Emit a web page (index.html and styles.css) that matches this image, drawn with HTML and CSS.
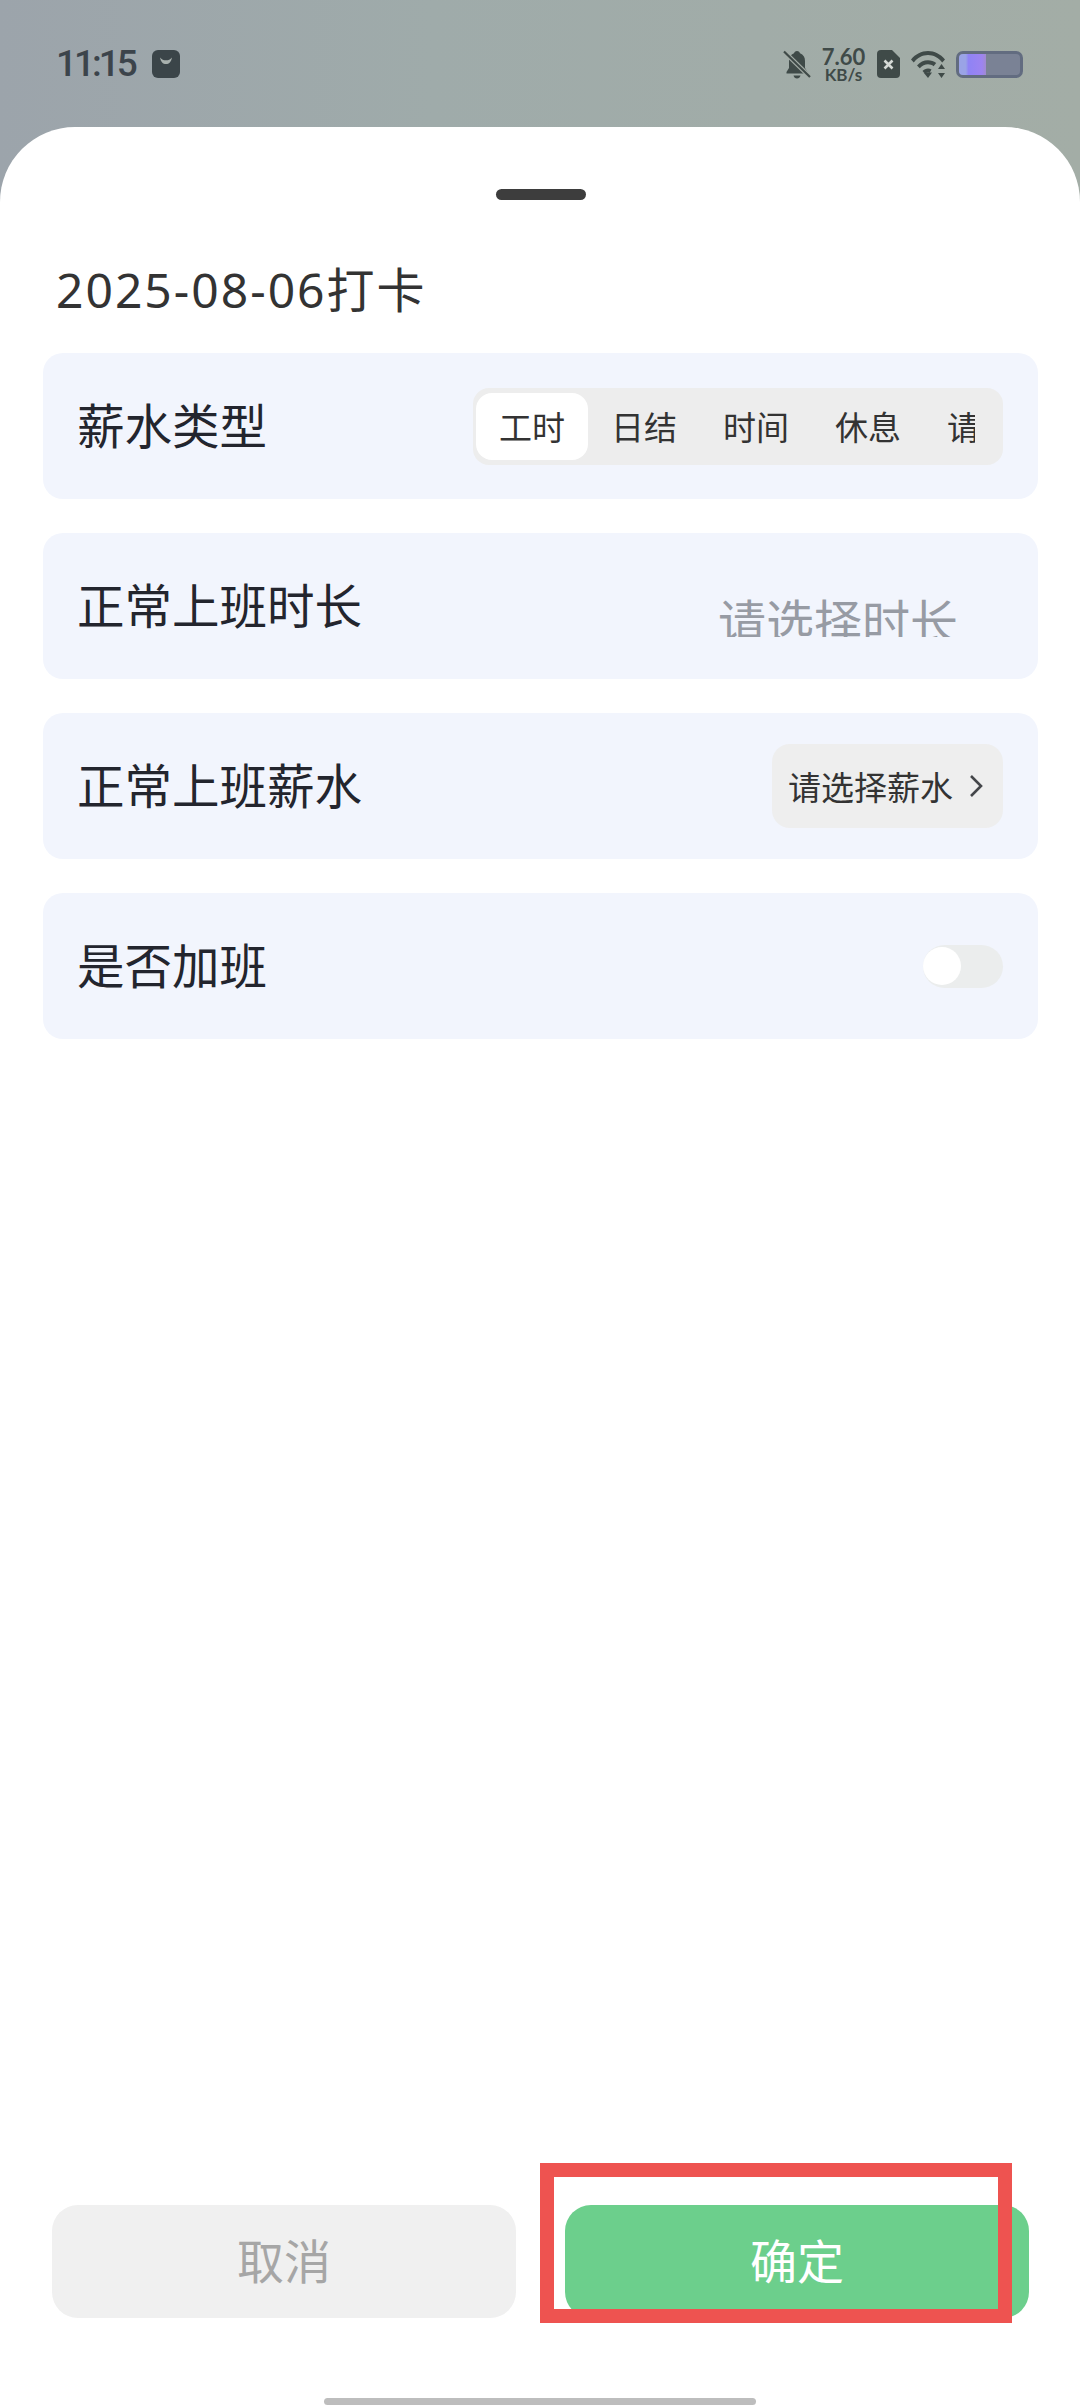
FILE: index.html
```html
<!DOCTYPE html>
<html lang="zh-CN">
<head>
    <meta charset="UTF-8">
    <meta name="viewport" content="width=device-width, initial-scale=1.0">
    <title>打卡</title>
    <link rel="stylesheet" href="styles.css">
</head>
<body>
    <div class="status-bar">
        <div class="status-left">
            <span class="clock">11:15</span>
            <svg class="bag-icon" width="28" height="28" viewBox="0 0 28 28">
                <rect width="28" height="28" rx="6" fill="#3b4549"/>
                <path d="M8 7.5c.8 4.6 3 6.5 6 6.5s5.200-1.900 6-6.500c-1.700 2-3.600 2.800-6 2.800s-4.300-.8-6-2.800z" fill="#a9b1ae"/>
            </svg>
        </div>
        <div class="status-right">
            <svg class="bell-icon" width="28" height="29" viewBox="0 0 28 29">
                <path d="M14 1c1.700 0 2.700 1 3 2.300 3.400 1.200 5 4 5 7.700v7l2.500 4v1.500H3.500V22L6 18v-7c0-3.700 1.600-6.500 5-7.700C11.300 2 12.300 1 14 1z" fill="#3f4a48"/>
                <path d="M10.500 25.500h7c-.4 2-1.800 3-3.500 3s-3.100-1-3.500-3z" fill="#3f4a48"/>
                <path d="M1 1.500 27 27" stroke="#a3aca6" stroke-width="4.500"/>
                <path d="M1 1.500 27 27" stroke="#3f4a48" stroke-width="2.200"/>
            </svg>
            <div class="net-speed">
                <span class="net-value">7.60</span>
                <span class="net-unit">KB/s</span>
            </div>
            <svg class="sim-icon" width="23" height="28" viewBox="0 0 23 28">
                <path d="M4 0h11l8 8v16a4 4 0 0 1-4 4H4a4 4 0 0 1-4-4V4a4 4 0 0 1 4-4z" fill="#3f4a48"/>
                <path d="M7.500 10.500l8 8M15.500 10.500l-8 8" stroke="#d5dad6" stroke-width="2.600"/>
            </svg>
            <svg class="wifi-icon" width="35" height="28" viewBox="0 0 35 28">
                <path d="M0 9.500C4.500 4 10.500 1 17 1s12.500 3 17 8.500l-2.800 3C27.500 7.700 22.500 5 17 5S6.500 7.700 2.800 12.500z" fill="#3f4a48"/>
                <path d="M6 15.500c3-3.400 6.800-5.200 11-5.200 3 0 5.800 1 8.200 2.700l-2.600 3.200C21 15 19 14.300 17 14.300c-3 0-5.800 1.300-8.200 3.900z" fill="#3f4a48"/>
                <path d="M11.500 21c1.500-1.500 3.400-2.400 5.500-2.400 1.300 0 2.500.3 3.500 1l-2 3.400-.2-.100c-.4-.3-.8-.4-1.300-.4-1 0-1.900.5-2.600 1.200z" fill="#3f4a48"/>
                <path d="M12.500 22.500 17 28l4-5.500z" fill="#3f4a48"/>
                <path d="M30.500 14l3.500 5h-7zM30.500 28l-3.500-5h7z" fill="#3f4a48"/>
            </svg>
            <div class="battery">
                <div class="battery-fill"></div>
            </div>
        </div>
    </div>

    <div class="sheet">
        <div class="sheet-handle"></div>
        <h1 class="sheet-title">2025-08-06打卡</h1>

        <div class="form-list">
            <div class="form-row">
                <span class="row-label">薪水类型</span>
                <div class="segment">
                    <div class="segment-scroll">
                        <span class="segment-item active">工时</span>
                        <span class="segment-item">日结</span>
                        <span class="segment-item">时间</span>
                        <span class="segment-item">休息</span>
                        <span class="segment-item">请假</span>
                    </div>
                </div>
            </div>
            <div class="form-row">
                <span class="row-label">正常上班时长</span>
                <div class="duration-input"><span>请选择时长</span></div>
            </div>
            <div class="form-row">
                <span class="row-label">正常上班薪水</span>
                <div class="salary-pick">
                    <span>请选择薪水</span>
                    <svg width="14" height="24" viewBox="0 0 14 24">
                        <path d="M2 2l10 10L2 22" fill="none" stroke="#44464a" stroke-width="2.600"/>
                    </svg>
                </div>
            </div>
            <div class="form-row">
                <span class="row-label">是否加班</span>
                <div class="toggle"><div class="toggle-thumb"></div></div>
            </div>
        </div>

        <div class="sheet-footer">
            <button class="btn btn-cancel">取消</button>
            <button class="btn btn-ok">确定</button>
            <div class="highlight-box"></div>
        </div>
        <div class="home-bar"></div>
    </div>
</body>
</html>
```

FILE: styles.css
```css
* {
    box-sizing: border-box;
}
html, body {
    margin: 0;
    padding: 0;
    height: 100%;
}
body {
    width: 1080px;
    height: 2408px;
    display: flex;
    flex-direction: column;
    overflow: hidden;
    background: linear-gradient(to right, #9ca4ab 0%, #9fabaa 40%, #a3ada6 100%);
    font-family: "Noto Sans", "Noto Sans CJK SC", sans-serif;
}

/* status bar */
.status-bar {
    height: 127px;
    flex-shrink: 0;
    display: flex;
    justify-content: space-between;
    align-items: flex-start;
    padding: 50px 57px 0 56px;
}
.status-left {
    display: flex;
    align-items: center;
    gap: 17px;
    height: 28px;
}
.clock {
    font-family: "Roboto", sans-serif;
    font-size: 37px;
    font-weight: 500;
    letter-spacing: -3px;
    color: #3c444b;
    line-height: 28px;
}
.status-right {
    display: flex;
    align-items: center;
    height: 28px;
}
.bell-icon {
    margin-right: 11px;
}
.net-speed {
    display: flex;
    flex-direction: column;
    align-items: center;
    width: 43px;
    margin-right: 12px;
    color: #3f4a48;
    font-family: "Lato", sans-serif;
    font-weight: 700;
}
.net-value {
    font-size: 22px;
    line-height: 21px;
}
.net-unit {
    font-size: 17px;
    line-height: 16px;
}
.sim-icon {
    margin-right: 11px;
}
.wifi-icon {
    margin-right: 10px;
}
.battery {
    width: 67px;
    height: 27px;
    border: 3px solid #626c80;
    border-radius: 7px;
    background: #7a8295;
    overflow: hidden;
}
.battery-fill {
    width: 27px;
    height: 100%;
    background: linear-gradient(to right, #9aa3e6 0%, #9aa3e6 25%, #8f83f5 35%, #9d84f0 85%, #a08ad0 100%);
}

/* bottom sheet */
.sheet {
    flex: 1;
    display: flex;
    flex-direction: column;
    background: #fff;
    border-radius: 75px 75px 0 0;
    padding: 62px 42px 3px 43px;
}
.sheet-handle {
    width: 90px;
    height: 11px;
    border-radius: 6px;
    background: #3d3d3d;
    align-self: center;
    flex-shrink: 0;
}
.sheet-title {
    margin: 55px 0 0 13px;
    font-size: 48px;
    font-weight: 400;
    line-height: 70px;
    color: #333;
    letter-spacing: 2px;
}
.form-list {
    display: flex;
    flex-direction: column;
    gap: 34px;
    margin-top: 28px;
}
.form-row {
    height: 146px;
    display: flex;
    align-items: center;
    justify-content: space-between;
    padding: 0 35px 0 34px;
    background: #f2f5fd;
    border-radius: 20px;
}
.row-label {
    font-size: 47.500px;
    color: #23252e;
    line-height: 60px;
}

.segment {
    width: 530px;
    height: 77px;
    background: #ededed;
    border-radius: 16px;
    padding: 5px 28px 0 3px;
}
.segment-scroll {
    display: flex;
    overflow: hidden;
}
.segment-item {
    flex: 0 0 112px;
    height: 67px;
    display: flex;
    align-items: center;
    justify-content: center;
    font-size: 33px;
    color: #333;
    border-radius: 16px;
}
.segment-item.active {
    background: #fff;
}

.duration-input {
    width: 245px;
    height: 43px;
    margin: 19px 40px 0 0;
    overflow: hidden;
    font-size: 48px;
    line-height: 56px;
    color: #979ba4;
    white-space: nowrap;
}

.salary-pick {
    width: 231px;
    height: 84px;
    display: flex;
    align-items: center;
    gap: 16px;
    padding-left: 16px;
    background: #eeeeee;
    border-radius: 18px;
    font-size: 33px;
    color: #333;
}

.toggle {
    width: 80px;
    height: 43px;
    border-radius: 22px;
    background: #ebeded;
    display: flex;
    align-items: center;
}
.toggle-thumb {
    width: 38px;
    height: 38px;
    border-radius: 50%;
    background: #fff;
}

/* footer buttons */
.sheet-footer {
    position: relative;
    margin-top: auto;
    display: flex;
    justify-content: space-between;
    padding: 0 9px;
}
.btn {
    width: 464px;
    height: 113px;
    border: none;
    border-radius: 26px;
    font-family: inherit;
    font-size: 47px;
    padding: 0 0 6px 0;
}
.btn-cancel {
    background: #f0f0f0;
    color: #a6a6a6;
}
.btn-ok {
    background: #6ccf8c;
    color: #fff;
}
.highlight-box {
    position: absolute;
    left: 497px;
    top: -42px;
    width: 472px;
    height: 160px;
    border: 14px solid #ee5350;
}
.home-bar {
    flex-shrink: 0;
    width: 432px;
    height: 7px;
    margin: 80px 0 0 281px;
    border-radius: 4px;
    background: #bdbdbd;
}
```
